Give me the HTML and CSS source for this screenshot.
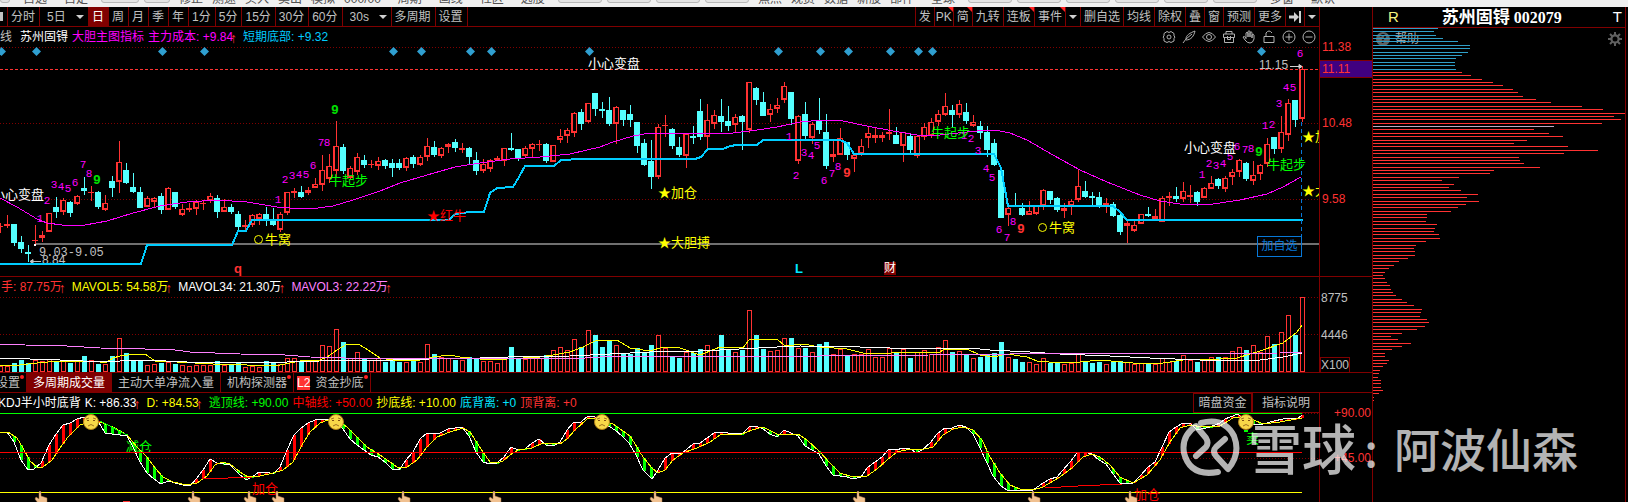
FILE: index.html
```html
<!DOCTYPE html>
<html lang="zh-CN">
<head>
    <meta charset="UTF-8">
    <meta name="viewport" content="width=device-width, initial-scale=1.0">
    <title>苏州固锝 002079</title>
    <link rel="stylesheet" href="styles.css">
</head>
<body>
    <header class="menu">
        <span class="menu-box narrow"></span>
        <nav class="menu-group wide">
            <span>自选</span><span>自定</span>
        </nav>
        <span class="menu-box short"></span>
        <span class="menu-box tiny"><i class="menu-gem"></i></span>
        <nav class="menu-group">
            <span>修正</span><span>测速</span><span>买入</span><span>卖出</span><span>模拟</span><span>000/00</span>
        </nav>
        <nav class="menu-group wide">
            <span>周期</span><span>画线</span><span>社区</span><span>选股</span>
        </nav>
        <span class="menu-box"></span><span class="menu-box"></span><span class="menu-box"></span><span class="menu-box"></span>
        <nav class="menu-group">
            <span>焦点</span><span>观赏</span><span>数据</span><span>新股</span><span>部件</span>
        </nav>
        <nav class="menu-group wide"><span>全球</span></nav>
        <span class="menu-box"></span><span class="menu-box"></span><span class="menu-box"></span><span class="menu-box"></span><span class="menu-box"></span><span class="menu-box"></span>
        <nav class="menu-group wide"><span>多窗</span><span>默认</span></nav>
    </header>

    <div class="desk">
        <main class="terminal">
            <div class="row">
                <div class="toolbar">
                    <span class="edge"></span>
                    <button>分时</button>
                    <span class="drop">
                        <select aria-label="日线周期"><option>5日</option></select>
                        <svg width="8" height="4"><path d="M0 0H8L4 4Z" fill="#d0d0d0"/></svg>
                    </span>
                    <button class="active">日</button>
                    <button>周</button>
                    <button>月</button>
                    <button>季</button>
                    <button>年</button>
                    <button>1分</button>
                    <button>5分</button>
                    <button>15分</button>
                    <button>30分</button>
                    <button>60分</button>
                    <span class="drop">
                        <select aria-label="秒周期"><option>30s</option></select>
                        <svg width="8" height="4"><path d="M0 0H8L4 4Z" fill="#d0d0d0"/></svg>
                    </span>
                    <button>多周期</button>
                    <button class="last">设置</button>
                    <div class="tools">
                        <button>发</button>
                        <button class="flag pk">PK</button>
                        <button class="flag">简</button>
                        <button>九转</button>
                        <button class="flag">连板</button>
                        <button class="flag">事件</button>
                        <button class="arrow" aria-label="更多事件"><svg width="8" height="4"><path d="M0 0H8L4 4Z" fill="#d0d0d0"/></svg></button>
                        <button>删自选</button>
                        <button>均线</button>
                        <button>除权</button>
                        <button>叠</button>
                        <button>窗</button>
                        <button>预测</button>
                        <button>更多</button>
                        <button class="skip" aria-label="收起"><svg width="12" height="12"><path d="M0 4.500H5V1L10 6L5 11V7.500H0ZM10 0H12V12H10Z" fill="#d0d0d0"/></svg></button>
                        <button class="arrow" aria-label="菜单"><svg width="8" height="4"><path d="M0 0H8L4 4Z" fill="#d0d0d0"/></svg></button>
                    </div>
                </div>
                <div class="axis"></div>
            </div>

            <section class="row">
                <div class="panel">
                    <div class="legend">
                        <span class="grey first-word">线</span>
                        <span class="white name">苏州固锝</span>
                        <span class="magenta">大胆主图指标</span>
                        <span class="magenta">主力成本: +9.84<b>↑</b></span>
                        <span class="sky">短期底部: +9.32</span>
                        <div class="icons">
                            <svg viewBox="0 0 14 14"><path d="M5 1.500L7 2.500L9 1.500L12 3.500V6L13 7L12 8.500V11L9 12.500L7 11.500L5 12.500L2 11V8.500L1 7L2 6V3.500Z"/><circle cx="7" cy="7" r="2"/></svg>
                            <svg viewBox="0 0 14 14"><path d="M1 13L4 9C4 5 8 3 13 1C12 6 9 10 4 10M4 9L10 4"/></svg>
                            <svg viewBox="0 0 14 14"><path d="M0.500 7Q7 -2 13.500 7Q7 16 0.500 7Z"/><circle cx="7" cy="7" r="2.500"/></svg>
                            <svg viewBox="0 0 14 14"><path d="M4 4V1.500H10V4M1.500 4H12.500V7.500H1.500ZM2.500 7.500V12.500H11.500V7.500M5.500 6V9.500H8.500V6"/></svg>
                            <svg viewBox="0 0 14 14"><path d="M4 9V3Q5 1.500 6 3V7V1.500Q7 0 8 1.500V7V2.500Q9 1 10 2.500V8V5Q11.500 3.500 12 5V9Q11 13 8 13Q5 13 3 10L1 7Q2 5.500 4 8"/></svg>
                            <svg viewBox="0 0 14 14"><path d="M2 6.500H12V12.500H2ZM4 6.500V3Q7 -1 10 3"/></svg>
                            <svg viewBox="0 0 14 14"><circle cx="7" cy="7" r="6"/><path d="M3.500 7H10.500M7 3.500V10.500"/></svg>
                            <svg viewBox="0 0 14 14"><circle cx="7" cy="7" r="6"/><path d="M3.500 7H10.500"/></svg>
                        </div>
                    </div>
                    <svg id="price" class="chart price"></svg>
                    <button class="add-watch">加自选</button>
                </div>
                <div class="axis"><svg id="priceAxis" class="scale price-scale"></svg></div>
            </section>

            <section class="row">
                <div class="panel">
                    <div class="legend">
                        <span class="red">手: 87.75万<b>↑</b></span>
                        <span class="yellow">MAVOL5: 54.58万<b>↑</b></span>
                        <span class="white">MAVOL34: 21.30万<b>↑</b></span>
                        <span class="violet">MAVOL3: 22.22万<b>↑</b></span>
                    </div>
                    <svg id="volume" class="chart volume"></svg>
                </div>
                <div class="axis"><svg id="volumeAxis" class="scale volume-scale"></svg></div>
            </section>

            <nav class="tabs">
                <button class="cut dot">设置</button>
                <button class="active">多周期成交量</button>
                <button>主动大单净流入量</button>
                <button class="dot">机构探测器</button>
                <button class="dot level"><i>L2</i>资金抄底</button>
            </nav>

            <section class="row">
                <div class="panel">
                    <div class="legend kdj">
                        <span class="white">KDJ半小时底背</span>
                        <span class="white">K: +86.33<b>↑</b></span>
                        <span class="yellow">D: +84.53<b>↑</b></span>
                        <span class="green">逃顶线: +90.00</span>
                        <span class="pure-red">中轴线: +50.00</span>
                        <span class="yellow">抄底线: +10.00</span>
                        <span class="aqua">底背离: +0</span>
                        <span class="red">顶背离: +0</span>
                        <div class="panel-buttons">
                            <button class="boxed">暗盘资金</button>
                            <button>指标说明</button>
                        </div>
                    </div>
                    <svg id="kdj" class="chart kdj-chart"></svg>
                </div>
                <div class="axis"><svg id="kdjAxis" class="scale kdj-scale"></svg></div>
            </section>
        </main>

        <aside class="side">
            <div class="side-head">
                <span class="mark-r">R</span>
                <h1>苏州固锝 <span>002079</span></h1>
                <span class="mark-t">T</span>
            </div>
            <div class="side-body">
                <div class="help">
                    <i>?</i><a href="#">帮助</a>
                    <svg class="gear" viewBox="0 0 14 14"><circle cx="7" cy="7" r="3.500" fill="none" stroke="#606060" stroke-width="2.500"/><path d="M7 0V14M0 7H14M2 2L12 12M12 2L2 12" stroke="#606060" stroke-width="2"/><circle cx="7" cy="7" r="2.500" fill="#000"/></svg>
                </div>
                <svg id="profile" class="profile"></svg>
            </div>
        </aside>
    </div>

    <div class="watermark">
        <svg viewBox="0 0 60 60">
            <path d="M21 6Q44 0 54 19Q61 37 48 52L36 39Q32 34 36 30L45 22"/>
            <path d="M38 55Q10 60 4 36Q1 19 16 9L26 21Q29 26 26 30L16 39"/>
        </svg>
        <span class="brand">雪球</span><span class="colon">:</span><span class="author">阿波仙森</span>
    </div>

    <script src="chart.js"></script>
</body>
</html>
```
FILE: styles.css
```css
* {
    box-sizing: border-box;
}

body {
    margin: 0;
    min-height: 100vh;
    position: relative;
    overflow: hidden;
    background: #000;
    color: #c0c0c0;
    font: 12px/18px "Liberation Sans", "Noto Sans CJK SC", sans-serif;
}

button,
select {
    margin: 0;
    padding: 0;
    border: 0;
    background: none;
    color: inherit;
    font: inherit;
    white-space: nowrap;
}

/* clipped menu strip */
.menu {
    display: flex;
    align-items: flex-end;
    gap: 5px;
    height: 7px;
    overflow: hidden;
    background: #f0f0f0;
    color: #505050;
    white-space: nowrap;
}

.menu-group {
    display: flex;
    gap: 9px;
    height: 18px;
    padding: 0 4px;
    line-height: 18px;
    margin-bottom: -1px;
}

.menu-group.wide {
    gap: 17px;
    padding: 0 8px;
}

.menu-box {
    flex: none;
    width: 44px;
    height: 20px;
    margin-bottom: 4px;
    border: 1px solid #b8b8b8;
    border-radius: 3px;
    background: #e4e4e4;
}

.menu-box.narrow {
    width: 10px;
}

.menu-box.short {
    width: 38px;
}

.menu-box.tiny {
    display: flex;
    justify-content: center;
    align-items: flex-end;
    width: 26px;
}

.menu-gem {
    width: 6px;
    height: 6px;
    margin-bottom: 3px;
    background: #e0a020;
    transform: rotate(45deg);
}

.desk {
    display: grid;
    grid-template-columns: minmax(0, 1fr) 256px;
}

.row {
    display: grid;
    grid-template-columns: minmax(0, 1fr) 53px;
}

.axis {
    border-left: 1px solid #800000;
}

/* toolbar */
.toolbar {
    display: flex;
    height: 20px;
    border-bottom: 1px solid #800000;
    white-space: nowrap;
}

.toolbar button,
.drop {
    position: relative;
    flex: none;
    height: 19px;
    padding: 0 4px 0 3px;
    border-left: 1px solid #800000;
}

.edge {
    width: 7px;
    margin: 5px 0;
    border-right: 4px solid #000;
    background: #c0c0c0;
}

.toolbar .active {
    background: #800000;
    color: #fff;
}

.toolbar .last {
    border-right: 1px solid #800000;
}

.drop {
    display: flex;
    align-items: center;
    width: 49px;
    padding-left: 7px;
}

.drop select {
    flex: 1;
    appearance: none;
}

.tools {
    display: flex;
    margin-left: auto;
}

.tools button {
    padding: 0 3px;
}

.tools .pk {
    width: 19px;
    padding: 0 1px;
}

.flag::after {
    content: "";
    position: absolute;
    top: 0;
    right: 0;
    border-top: 5px solid #f22;
    border-left: 5px solid transparent;
}

.toolbar .arrow {
    display: flex;
    align-items: center;
    width: 15px;
}

.toolbar .skip {
    display: flex;
    align-items: center;
}

/* chart panels */
.panel {
    position: relative;
    border-bottom: 1px solid #800000;
}

.legend {
    display: flex;
    gap: 4px;
    height: 20px;
    padding-left: 1px;
    line-height: 20px;
    white-space: nowrap;
}

.legend b {
    color: #ff3232;
    font: 14px/14px "Liberation Sans", sans-serif;
    display: inline-block;
    width: 6px;
    text-indent: -3px;
    vertical-align: middle;
}

.first-word {
    margin-left: -1px;
    padding-right: 4px;
}

.icons {
    display: flex;
    gap: 6px;
    margin-left: auto;
    padding: 3px 3px 0 0;
}

.icons svg {
    width: 14px;
    height: 14px;
    fill: none;
    stroke: #b0b0b0;
}

.legend.kdj {
    padding-left: 0;
    line-height: 21px;
    margin-left: -2px;
}

.panel-buttons {
    display: flex;
    margin-left: auto;
}

.panel-buttons button {
    width: 66px;
    height: 20px;
    line-height: 18px;
    border-bottom: 1px solid #800000;
}

.panel-buttons .boxed {
    width: 60px;
    border: 1px solid #800000;
    border-right-width: 2px;
}

.chart {
    display: block;
    width: 100%;
}

.price {
    height: 229px;
}

.volume {
    height: 75px;
}

.kdj-chart {
    height: 89px;
}

.scale {
    display: block;
    width: 100%;
}

.price-scale {
    height: 250px;
}

.volume-scale {
    height: 96px;
}

.kdj-scale {
    height: 109px;
}

.chart text,
.scale text {
    font-family: "Liberation Sans", "Noto Sans CJK SC", sans-serif;
}

.chart .count {
    font-family: "Liberation Mono", monospace;
    font-size: 11px;
    text-anchor: middle;
}

.chart .nine {
    font-size: 13px;
    font-weight: bold;
}

.chart .note {
    font-family: "Noto Sans CJK SC", sans-serif;
    font-size: 13px;
}

.chart .gap {
    font-family: "Liberation Mono", monospace;
}

.add-watch {
    position: absolute;
    right: 17px;
    top: 209px;
    width: 45px;
    height: 21px;
    border: 1px solid #0878d8;
    color: #0878d8;
    line-height: 19px;
}

.row:last-child .panel {
    border-bottom: 0;
}

/* tabs */
.tabs {
    display: flex;
    height: 20px;
    border-bottom: 1px solid #800000;
}

.tabs button {
    position: relative;
    display: flex;
    align-items: center;
    padding: 0 6px;
    border-right: 1px solid #800000;
}

.tabs .active {
    background: #800000;
    color: #fff;
}

.tabs .cut {
    justify-content: flex-end;
    width: 27px;
}

.dot::after {
    content: "";
    position: absolute;
    top: 2px;
    right: 2px;
    width: 4px;
    height: 4px;
    border-radius: 50%;
    background: #ff2020;
}

.tabs .level {
    padding: 0 7px 0 3px;
}

.level i {
    margin-right: 5px;
    background: #ff3232;
    color: #fff;
    font-style: normal;
    line-height: 14px;
}

/* right side */
.side {
    border-left: 1px solid #800000;
    padding-right: 2px;
}

.side-head {
    display: flex;
    height: 21px;
    padding: 0 3px 0 15px;
    border-bottom: 1px solid #800000;
    border-right: 1px solid #800000;
    line-height: 20px;
    font-size: 15px;
    color: #fff;
}

.side-head h1 {
    margin: 0 auto 0 43px;
    font: bold 17px/18px "Noto Sans CJK SC", sans-serif;
    white-space: nowrap;
}

.side-head h1 span {
    font-family: "Liberation Serif", serif;
    font-size: 16px;
}

.mark-r {
    color: #f4f480;
}

.side-body {
    position: relative;
    border-right: 1px solid #800000;
}

.help {
    position: absolute;
    top: 2px;
    left: 3px;
    right: 3px;
    display: flex;
    align-items: center;
    gap: 5px;
}

.help a {
    color: #b0b0b0;
    text-decoration: none;
}

.help i {
    width: 14px;
    height: 14px;
    border-radius: 50%;
    background: #606060;
    color: #000;
    font: bold 12px/14px "Liberation Sans", sans-serif;
    text-align: center;
}

.gear {
    width: 14px;
    margin-left: auto;
}

.profile {
    position: relative;
    display: block;
    width: 100%;
    height: 474px;
}

.watermark {
    position: absolute;
    left: 1180px;
    bottom: 15px;
    display: flex;
    align-items: center;
    height: 80px;
    color: #fff;
    opacity: 0.7;
    font-family: "Noto Sans CJK SC", sans-serif;
    font-weight: 500;
    white-space: nowrap;
    pointer-events: none;
}

.watermark svg {
    width: 60px;
    height: 60px;
    margin-right: 8px;
    fill: none;
    stroke: #fff;
    stroke-width: 6;
    stroke-linecap: round;
    stroke-linejoin: round;
}

.brand {
    font-size: 54px;
}

.colon {
    width: 38px;
    padding-right: 8px;
    font-size: 46px;
    text-align: center;
}

.author {
    font-size: 46px;
}

.grey { color: #c0c0c0; }
.white { color: #fff; }
.magenta { color: #ff00ff; }
.sky { color: #00ccff; }
.red { color: #ff3232; }
.pure-red { color: #ff0000; }
.yellow { color: #ffff00; }
.violet { color: #ff80ff; }
.green { color: #00ff00; }
.aqua { color: #00e5ff; }
```
FILE: chart.js
```js
const STEP = 7;
const UP = '#ff3232';
const DOWN = '#54ffff';
const GRID = '#800000';

// kind, high, body top, body bottom, low
const candles = `
r223,226,227,233 r215,224,226,228 c224,224,243,246 c236,242,249,253 c245,252,254,262 r225,240,241,245 r231,235,238,242 r213,213,232,232
c197,207,212,218 r198,200,212,215 c201,202,213,217 r195,196,204,205 c177,188,191,195 r186,192,193,201 c191,192,207,209 r195,203,210,211
c176,181,188,197 r141,162,182,193 c163,170,183,184 c173,187,192,193 c187,192,208,208 r196,198,207,207 r197,198,202,208 c193,196,210,214
r187,188,210,210 c192,192,207,209 r204,209,215,216 r203,208,210,212 r200,202,209,215 r201,203,204,210 r193,196,201,203 c195,198,212,218
r199,207,212,212 c204,207,212,214 c211,214,227,230 r220,225,227,230 r214,215,225,227 r213,214,219,225 c207,214,219,226 c208,219,225,226
r212,214,230,232 r192,192,213,215 r188,191,193,198 c186,192,197,198 r187,190,193,195 r178,184,188,188 r155,170,185,191 r154,166,179,183
r121,146,171,177 c144,147,171,174 r166,168,178,180 r153,157,172,175 c155,160,165,168 r160,164,165,168 r157,161,166,170 c159,160,166,169
c159,163,168,177 c159,163,168,170 r157,158,168,171 c155,157,164,168 r155,157,165,166 r138,146,157,161 c141,147,155,157 r147,148,156,158
r143,144,147,153 c139,142,148,152 r143,148,150,153 c147,148,157,164 c152,160,171,175 r159,164,171,173 r159,160,169,172 r156,158,160,161
r148,148,161,166 c133,148,150,151 c149,149,159,161 r146,148,156,158 r143,144,149,157 r140,144,145,151 c143,144,161,163 r145,145,162,162
r129,136,140,143 r128,130,136,143 r112,113,133,137 c109,112,124,130 r103,103,122,123 c93,93,109,116 c102,109,111,118 c97,110,124,126
r106,107,124,144 c110,110,120,126 c105,114,120,127 c122,122,146,153 c139,143,165,166 c140,161,177,189 r124,127,177,179 r115,125,126,137
c128,129,146,149 c137,147,155,157 r134,134,156,168 c126,136,138,144 c99,111,137,140 r104,120,137,149 r110,115,124,129 c99,116,122,132
c106,121,126,131 r114,117,125,133 c115,116,122,150 r82,82,130,133 c87,88,100,105 c92,102,116,116 r104,109,115,122 r98,105,109,113
r82,86,100,103 c92,92,119,125 r115,116,161,164 c102,114,136,139 r122,124,138,144 c98,120,130,134 c114,132,166,169 r140,154,157,162
r128,138,155,155 c142,142,155,160 r153,155,159,172 r139,146,154,156 r126,133,138,148 r128,135,138,143 r132,135,138,142 r109,132,134,140
c127,135,144,144 r132,132,146,162 c134,136,150,153 r135,136,156,158 r123,127,137,140 r118,122,136,138 r110,114,122,126 r93,106,115,116
c105,110,115,127 r100,104,115,118 c103,112,121,124 r115,122,126,127 c121,126,133,139 c126,132,150,157 c139,143,165,166 c170,170,218,218
r203,208,215,226 c193,205,206,207 c203,208,215,216 r201,211,215,215 r206,206,214,215 r189,190,206,210 c191,191,200,204 c197,198,210,212
r203,208,211,218 r199,201,206,215 r169,186,200,202 c181,191,197,198 c192,196,198,205 c192,197,206,208 r198,203,206,213 c202,204,216,217
c212,215,232,235 r221,223,226,243 r220,225,231,232 r214,214,224,224 c207,214,216,217 r209,216,219,221 r196,198,222,222 r192,196,198,206
c187,196,199,202 r182,191,199,202 r185,195,197,203 c191,192,202,206 r187,188,198,198 r176,183,189,189 c178,179,186,189 r176,178,189,192
r169,172,177,185 r159,160,172,177 c162,163,179,181 r161,175,181,185 r164,165,174,180 r138,144,164,167 c137,137,149,154 r116,132,149,153
r99,103,135,141 c100,100,120,127 r66,69,119,122
`.trim().split(/\s+/).map(s => ({ up: s[0] === 'r', v: s.slice(1).split(',').map(Number) }));

const volumes = [
    6, 6, 9, 12, 9, 12, 11, 13, 11, 11, 9, 11, 16, 12, 8, 8, 16, 34, 19, 12, 11, 7, 8, 9, 10, 8, 7, 6, 7, 7, 7, 11,
    7, 8, 10, 5, 6, 5, 11, 9, 8, 14, 14, 10, 11, 11, 27, 26, 43, 30, 14, 20, 14, 12, 14, 10, 13, 10, 10, 11, 10, 28, 18, 15,
    14, 12, 12, 15, 14, 11, 11, 9, 13, 25, 14, 13, 14, 14, 17, 22, 25, 22, 33, 25, 42, 37, 25, 32, 27, 19, 18, 24, 20, 27, 37, 24,
    15, 14, 20, 19, 23, 27, 22, 37, 23, 20, 22, 62, 37, 23, 21, 22, 34, 34, 24, 24, 20, 28, 30, 18, 23, 16, 18, 18, 23, 15, 15, 24,
    20, 23, 14, 20, 22, 18, 25, 32, 20, 21, 18, 14, 15, 17, 19, 30, 15, 13, 10, 10, 8, 14, 9, 9, 8, 9, 19, 10, 9, 10, 8, 11,
    11, 10, 8, 9, 9, 8, 14, 10, 11, 17, 12, 10, 12, 15, 15, 15, 21, 25, 22, 27, 20, 36, 28, 40, 57, 37, 75
];

const costLine = '0,198 17,207 37,219 47,223 62,225 85,225 107,221 133,213 160,206 187,202 217,200 247,202 277,207 290,208 318,208 333,206 353,200 380,191 400,183 427,175 455,167 480,163 510,159 540,157 570,154 600,147 613,142 633,136 650,133 700,133 733,133 757,130 777,127 800,122 823,120 843,121 867,126 893,131 917,135 940,135 967,132 987,130 1000,131 1010,133 1027,140 1053,155 1080,170 1107,182 1140,195 1160,201 1180,204 1213,204 1240,200 1267,194 1283,187 1301,177';
const bottomLine = '0,264 141,264 147,245 232,245 238,231 246,231 252,220 449,220 455,214 470,212 484,212 490,193 497,188 513,187 519,177 525,166 554,166 561,160 582,159 695,159 701,157 708,149 723,149 730,146 737,145 757,145 763,140 840,140 847,143 854,154 994,154 1001,168 1008,206 1113,206 1120,212 1127,220 1303,220';

const mavol5 = '0,366 20,365 37,363 60,361 90,361 100,362 107,362 113,358 120,356 128,355 145,354 155,361 177,362 213,364 247,365 280,365 300,361 320,360 327,357 337,350 347,344 360,345 368,350 380,358 393,360 420,360 433,357 450,355 460,357 480,359 500,360 507,359 540,357 553,355 570,352 583,347 595,341 617,340 630,348 650,351 663,347 680,348 700,355 720,347 743,348 749,340 777,339 785,346 803,344 820,347 847,349 863,353 883,354 900,352 940,352 945,349 967,349 980,355 993,357 1007,354 1027,357 1037,361 1060,363 1080,362 1100,360 1133,363 1163,363 1183,360 1220,359 1237,358 1260,351 1283,343 1297,332 1302,325';
const mavol34 = '0,358 30,359 60,360 83,361 120,361 145,360 187,362 287,362 320,361 340,360 393,360 430,359 480,358 508,357 570,356 610,354 650,352 660,351 700,351 720,350 777,347 800,346 860,347 890,348 970,348 990,350 1030,352 1060,354 1110,356 1150,358 1200,360 1260,360 1283,357 1302,353';
const mavol3 = '0,344 25,345 67,346 100,348 145,349 175,350 190,352 240,354 285,355 310,357 345,358 585,358 600,357 820,356 930,355 1010,354 1280,353 1302,352';

const kLine = '0,432 7,432 14,442 21,460 28,470 34,469 41,463 49,445 56,434 63,425 70,423 77,419 84,417 91,418 98,421 105,433 112,434 127,436 133,447 140,462 147,473 154,479 161,484 168,481 183,485 190,486 197,478 203,470 210,459 217,463 230,465 238,473 246,480 252,477 259,472 266,472 273,474 280,467 287,450 294,435 301,428 308,423 315,420 328,419 336,420 343,429 350,439 357,445 364,450 371,455 378,457 385,462 392,469 399,470 406,460 413,452 420,439 427,433 440,433 448,429 462,427 469,436 476,452 483,462 490,464 497,463 504,457 511,447 518,450 525,449 532,443 539,439 546,445 553,446 560,442 567,430 574,422 581,422 588,416 595,417 603,423 610,427 615,430 622,436 629,443 636,455 643,470 652,479 658,470 665,458 672,453 680,454 686,450 693,444 700,443 707,438 714,433 721,432 728,433 742,434 749,427 756,426 763,429 770,434 777,437 784,430 791,433 798,436 805,446 812,450 819,454 826,466 833,475 847,477 853,479 861,477 867,468 875,462 882,457 889,449 896,450 903,448 910,449 917,453 923,449 930,443 937,434 945,428 952,428 959,425 966,427 973,434 980,448 987,463 993,476 1001,486 1007,490 1033,490 1043,483 1050,479 1057,477 1063,470 1070,462 1077,453 1085,452 1092,454 1099,460 1106,464 1113,474 1120,483 1133,483 1141,475 1148,467 1155,462 1162,447 1169,432 1176,427 1183,423 1190,423 1197,430 1210,427 1220,423 1225,419 1238,414 1249,424 1260,425 1270,422 1287,418 1297,419 1302,415';
const dLine = '0,432 8,432 17,438 23,448 30,461 37,467 43,467 52,460 60,448 68,437 80,425 90,422 100,422 113,427 127,435 137,447 147,457 155,468 163,477 173,482 187,485 197,483 207,476 215,465 222,462 230,464 240,472 248,477 260,476 273,473 283,470 293,462 302,445 310,432 320,423 328,420 336,420 347,427 357,437 367,447 380,455 390,462 397,467 407,467 417,460 427,447 437,437 450,432 463,428 470,432 483,452 490,462 497,463 503,461 510,455 518,450 532,448 543,443 560,444 567,439 575,430 587,419 595,418 603,421 613,424 623,431 630,436 637,447 643,457 652,468 658,473 665,470 673,460 683,453 697,448 710,442 720,435 742,434 752,430 763,427 777,434 798,434 807,440 820,452 830,463 840,473 853,477 867,476 877,469 887,460 897,452 910,449 920,450 933,447 943,435 953,429 963,427 973,430 982,440 990,457 1000,473 1010,485 1020,489 1033,490 1043,487 1060,477 1073,467 1083,457 1092,454 1100,457 1110,465 1120,477 1133,483 1147,475 1160,460 1170,442 1180,428 1190,425 1203,427 1220,426 1233,418 1247,417 1263,424 1280,422 1302,418';

// nine-turn counts: x, y, digit
const counts = [
    [40, 218, 1], [47, 200, 2], [54, 184, 3], [61, 186, 4], [68, 188, 5], [75, 182, 6], [83, 164, 7], [89, 173, 8],
    [278, 199, 1], [285, 179, 2], [292, 175, 3], [299, 174, 4], [306, 174, 5], [313, 165, 6], [321, 142, 7], [327, 142, 8],
    [789, 136, 1], [796, 175, 2], [804, 152, 3], [811, 155, 4], [817, 145, 5], [824, 180, 6], [832, 173, 7], [838, 166, 8],
    [964, 135, 1], [971, 138, 2], [978, 150, 3], [986, 168, 4], [992, 177, 5], [999, 229, 6], [1007, 237, 7], [1013, 221, 8],
    [1202, 174, 1], [1209, 163, 2], [1216, 165, 3], [1223, 163, 4], [1230, 156, 5], [1237, 146, 6], [1245, 149, 7], [1251, 148, 8],
    [1265, 125, 1], [1272, 124, 2], [1279, 103, 3], [1286, 87, 4], [1293, 87, 5], [1300, 53, 6]
];
const nines = [[97, 180, '#00e000'], [335, 110, '#00e000'], [847, 173, UP], [1021, 229, UP], [1259, 152, '#00e000']];
const notes = [
    [-8, 194, '小心变盘', '#fff'], [588, 63, '小心变盘', '#fff'], [1184, 147, '小心变盘', '#fff'],
    [329, 180, '牛起步', '#0f0'], [931, 132, '牛起步', '#0f0'], [1267, 164, '牛起步', '#0f0'],
    [265, 239, '牛窝', '#ff0'], [1049, 227, '牛窝', '#ff0'],
    [427, 215, '★红牛', '#f00'], [658, 192, '★加仓', '#ff0'], [658, 242, '★大胆搏', '#ff0'],
    [1302, 136, '★加仓', '#ff0'], [1302, 190, '★大胆搏', '#ff0']
];
const diamonds = [1, 36, 162, 204, 393, 421, 470, 491, 589, 778, 820, 848, 890, 918, 932, 1261];

// cost distribution, one bar per price level
const levels = [
    65, 61, 63, 70, 85, 97, 97, 95, 89, 83, 82, 82, 83,
    89, 98, 109, 120, 130, 140, 145, 150, 163, 178, 209, 230, 252, 241, 248, 229, 181,
    161, 176, 190, 154, 141, 195, 225, 191, 146, 147, 151, 167, 121, 117, 86, 69, 81, 76, 88, 105,
    94, 106, 93, 85, 78, 54, 54, 53, 64, 62, 61, 66, 67, 53, 43, 41, 42, 42, 35, 26,
    21, 16, 12, 10, 12, 14, 17, 18, 20, 23, 29, 34, 41, 49, 48, 47, 54, 56, 52, 44,
    29, 18, 25, 38, 29, 19, 12, 12, 16, 14, 10, 7, 6, 5, 8, 8, 8, 10, 6, 1, 1
];

const rect = (x, y, w, h, fill) => `<rect x="${x}" y="${y}" width="${w}" height="${h}" fill="${fill}"/>`;
const box = (x, y, w, h, stroke) => `<rect x="${x + 0.5}" y="${y + 0.5}" width="${w - 1}" height="${Math.max(h - 1, 1)}" fill="#000" stroke="${stroke}"/>`;
const path = (points, color, width = 1) => `<polyline points="${points}" fill="none" stroke="${color}" stroke-width="${width}" shape-rendering="crispEdges"/>`;
const level = (y, color, dash = '', x2 = '100%') => `<line x1="0" x2="${x2}" y1="${y + 0.5}" y2="${y + 0.5}" stroke="${color}" stroke-dasharray="${dash}"/>`;
const text = (x, y, s, color, size = 12, extra = '') => `<text x="${x}" y="${y + 4}" fill="${color}" font-size="${size}" ${extra}>${s}</text>`;
const note = (x, y, s, color) => `<text class="note" x="${x}" y="${y + 5}" fill="${color}">${s}</text>`;

function put(id, top, html) {
    document.getElementById(id).innerHTML = `<g transform="translate(0 ${-top})">${html}</g>`;
}

function drawPrice() {
    let s = level(47, GRID, '1 2') + level(123, GRID, '1 2') + level(199, GRID, '1 2');
    s += level(69, UP, '3 2');
    s += '<line x1="35" x2="100%" y1="244" y2="244" stroke="#707070" stroke-width="2"/>';
    candles.forEach((c, i) => {
        const x = i * STEP;
        const [high, top, bottom, low] = c.v;
        const color = c.up ? UP : DOWN;
        s += rect(x, high, 1, low - high, color);
        s += rect(x - 3, top, 6, Math.max(bottom - top, 1), color);
        // rising bodies are hollow
        if (c.up && bottom - top > 3) {
            s += rect(x - 1, top + 1, 3, bottom - top - 3, '#000');
        }
    });
    s += rect(34, 244, 2, 2, '#fff');
    s += text(39, 252, '9.03-9.05', '#c0c0c0', 12, 'class="gap"') + text(42, 260, '8.84', '#c0c0c0');
    s += '<path d="M30 261.500H41M30 261.500L33 259.500V263.500Z" stroke="#c0c0c0" fill="#c0c0c0"/>';
    s += path(costLine, '#ff00ff') + path(bottomLine, '#00ccff', 2);
    s += '<line x1="1301.500" x2="1301.500" y1="122" y2="236" stroke="#0878d8" stroke-dasharray="4 3"/>';
    diamonds.forEach(x => {
        s += `<path d="M${x - 4} 51.500L${x + 0.5} 47L${x + 5} 51.500L${x + 0.5} 56Z" fill="#2f9fd0"/>`;
    });
    counts.forEach(([x, y, n]) => {
        s += `<text class="count" x="${x}" y="${y + 4}" fill="#ff00ff">${n}</text>`;
    });
    nines.forEach(([x, y, color]) => {
        s += `<text class="count nine" x="${x}" y="${y + 4}" fill="${color}">9</text>`;
    });
    notes.forEach(n => { s += note(...n); });
    s += '<circle cx="258.500" cy="239.500" r="4" fill="none" stroke="#ff0"/><circle cx="1042.500" cy="227.500" r="4" fill="none" stroke="#ff0"/>';
    s += text(1259, 65, '11.15', '#c0c0c0');
    s += '<path d="M1290 66.500H1302M1302 66.500L1299 64.500V68.500Z" stroke="#d0d0d0" fill="#d0d0d0"/>';
    s += text(234, 269, 'q', UP, 13, 'font-weight="bold"') + text(795, 269, 'L', '#00e5ff', 13, 'font-weight="bold"');
    s += rect(884, 262, 12, 13, GRID) + text(884, 268, '财', '#fff');
    put('price', 47, s);

    s = text(2, 47, '11.38', UP) + rect(0, 60, 60, 18, GRID) + rect(0, 61, 60, 16, '#400080') + text(2, 69, '11.11', UP);
    s += text(2, 123, '10.48', UP) + text(2, 199, '9.58', UP) + level(276, GRID);
    put('priceAxis', 27, s);
}

function drawVolume() {
    let s = level(297, GRID, '1 2') + level(334, GRID, '1 2');
    volumes.forEach((h, i) => {
        const x = i * STEP - 2;
        s += candles[i].up ? box(x, 372 - h, 5, h, UP) : rect(x, 372 - h, 5, h, DOWN);
    });
    s += path(mavol5, '#ffff00') + path(mavol34, '#ffffff') + path(mavol3, '#ff80ff');
    put('volume', 297, s);
    put('volumeAxis', 277, text(1, 298, '8775', '#c0c0c0') + text(1, 335, '4446', '#c0c0c0') +
        box(0, 357, 30, 16, GRID) + text(1, 365, 'X100', '#c0c0c0') + level(372, GRID));
}

function valueAt(points, x) {
    for (let i = 1; i < points.length; i++) {
        if (x <= points[i][0]) {
            const [x0, y0] = points[i - 1];
            const [x1, y1] = points[i];
            return y0 + (y1 - y0) * (x - x0) / (x1 - x0);
        }
    }
    return points[points.length - 1][1];
}

function face(x) {
    return `<circle cx="${x}" cy="422" r="7.500" fill="#f8d848" stroke="#b08018"/>` +
        `<path d="M${x - 5} 419L${x - 2} 418M${x + 2} 418L${x + 5} 419M${x - 3} 426Q${x} 423 ${x + 3} 426" stroke="#a07020" fill="none"/>` +
        rect(x - 4, 420, 2, 1, '#805010') + rect(x + 2, 420, 2, 1, '#805010');
}

function hand(x) {
    return `<path d="M${x - 2} 499V492Q${x - 1} 490 ${x} 492V496L${x + 6} 498V503H${x - 3}L${x - 6} 499L${x - 5} 497Z" fill="#f0c090" stroke="#b07840" stroke-width="0.500"/>`;
}

function drawKdj() {
    const parse = line => line.split(' ').map(p => p.split(',').map(Number));
    const k = parse(kLine);
    const d = parse(dLine);
    let s = '<line x1="1302" x2="100%" y1="413.500" y2="413.500" stroke="#800000" stroke-dasharray="1 2"/>' + level(458, GRID, '1 2');
    s += note(126, 446, '减仓', '#0f0');
    for (let i = 0; i < candles.length; i++) {
        const x = i * STEP;
        const a = valueAt(k, x);
        const b = valueAt(d, x);
        s += rect(x - 1, Math.round(Math.min(a, b)), 3, Math.max(Math.round(Math.abs(a - b)), 1), a < b ? '#f00' : '#0f0');
    }
    s += path(kLine, '#ffffff') + path(dLine, '#ffff00');
    s += path('100,421 127,435', '#00ff00') + path('202,479 228,478 252,477', '#ff0000') + path('1045,488 1078,486 1122,484', '#ff0000');
    s += level(413, '#00ff00', '', 1302) + level(452, '#ff0000', '', 1302) + level(492, '#ffff00', '', 1302);
    s += note(252, 488, '加仓', '#f00') + note(1134, 494, '加仓', '#f00') + rect(1244, 430, 4, 2, '#0f0') + note(1246, 438, '卖', '#0f0');
    [91, 336, 602, 1246].forEach(x => { s += face(x); });
    [41, 194, 250, 278, 404, 495, 656, 859, 1034, 1131].forEach(x => { s += hand(x); });
    s += rect(123, 501, 7, 1, UP);
    put('kdj', 413, s);
    put('kdjAxis', 393, text(51, 413, '+90.00', UP, 12, 'text-anchor="end"') + text(51, 458, '+45.00', UP, 12, 'text-anchor="end"'));
}

function drawProfile() {
    let s = '';
    levels.forEach((w, i) => {
        const color = i < 13 ? '#2f9fc8' : i === 29 ? '#c0a8c0' : UP;
        s += rect(0, Math.floor(28.4 + i * 3.385), w, 1, color);
    });
    put('profile', 28, s);
}

drawPrice();
drawVolume();
drawKdj();
drawProfile();
```
